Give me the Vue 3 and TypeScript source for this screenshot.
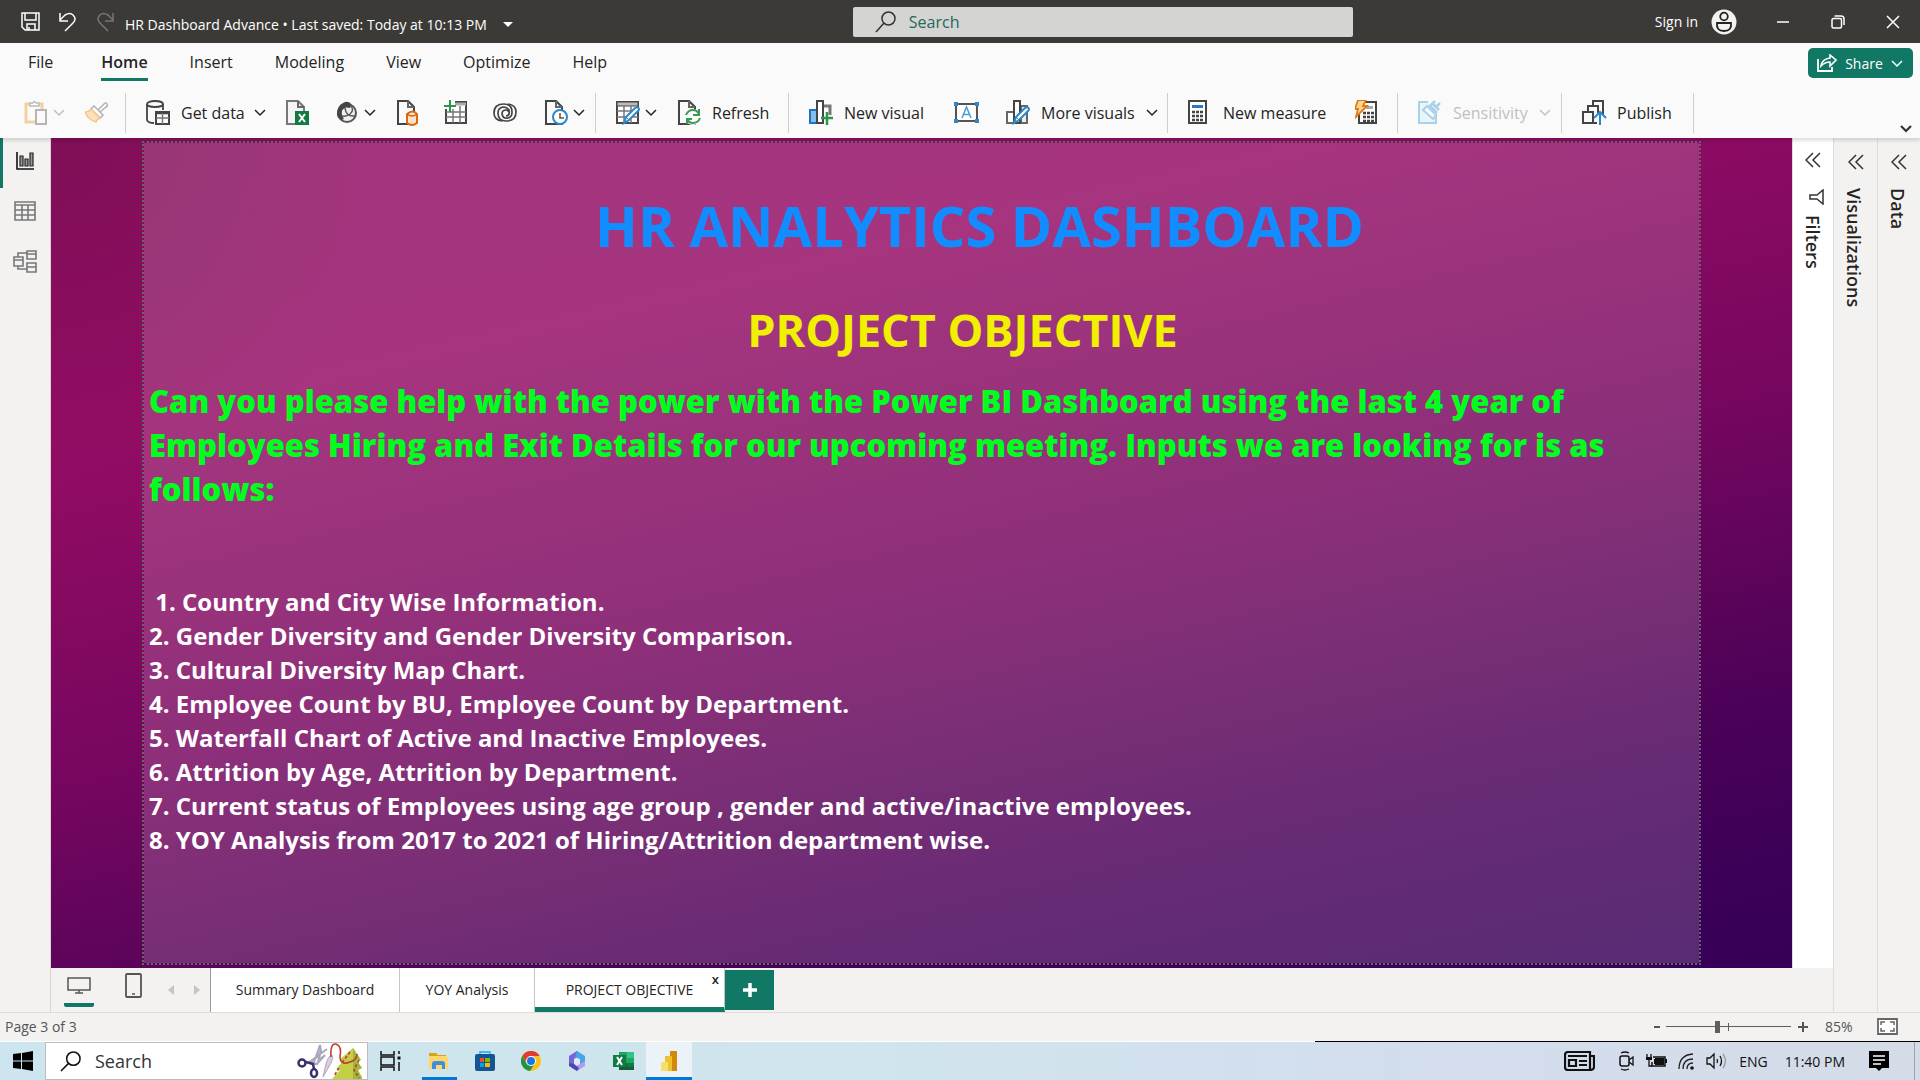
<script setup lang="ts">
import { ref } from 'vue'

interface RibbonItem {
  icon: string
  title: string
  width: number
  label?: string
  chevron?: boolean
  disabled?: boolean
}
interface RibbonGroup {
  width: number
  items: RibbonItem[]
}

const page = '<path d="M2 1h10l6 6v17H2z" fill="#fafafa" stroke="#444" stroke-width="2"/><path d="M12 1v6h6" fill="none" stroke="#666" stroke-width="2"/>'
const grid = '<path d="M1 2h21v21H1z" fill="#fff" stroke="#484644" stroke-width="2"/><path d="M1 2h21v4H1z" fill="#bbb" stroke="#484644" stroke-width="1"/><path d="M1 11h21M1 17h21M8 6v17M15 6v17" stroke="#777" stroke-width="1.5"/>'
const pencil = '<path d="M8 23l2-6 9-9q3-2 4 1 0 1-1 2l-9 9z" fill="#fff" stroke="#2b88c8" stroke-width="2"/><path d="M10 17l3 3" stroke="#2b88c8"/>'

const icons: Record<string, string> = {
  paste: '<path d="M7 4H2v18h9" fill="none" stroke="#f5cf9f" stroke-width="3"/><path d="M14 4h4v5" fill="none" stroke="#f5cf9f" stroke-width="3"/><path d="M6 6V3h3q1-3 3 0h3v3z" fill="#fff" stroke="#bbb" stroke-width="1.5"/><path d="M12 10h10v14H12z" fill="#fafafa" stroke="#b5b5b5" stroke-width="2"/>',
  brush: '<path d="M13 10l6-6q2-2 3 0t-1 3l-6 5" fill="#fff" stroke="#b5b5b5" stroke-width="1.600"/><path d="M9 6l9 9-3 3L6 9z" fill="#fff" stroke="#b5b5b5" stroke-width="1.600"/><path d="M6 9Q4 12 0 12q3 8 11 10 0-2 4-4z" fill="#fce0ba" stroke="#f5c48a" stroke-width="1.400"/>',
  database: '<ellipse cx="9" cy="4" rx="8" ry="3" fill="none" stroke="#444" stroke-width="1.8"/><path d="M1 4v16q1 3 7 3M17 4v6" fill="none" stroke="#444" stroke-width="1.8"/><path d="M10 12h13v12H10z" fill="#fff" stroke="#444" stroke-width="2"/><path d="M10 13h13" stroke="#444" stroke-width="2.5"/><path d="M10 18h13M16.500 13v11" stroke="#777" stroke-width="1.5"/>',
  excelFile: '<path d="M9 24H1V1h11l6 6v4" fill="#f4f4f4" stroke="#777" stroke-width="2"/><path d="M12 1v6h6" fill="none" stroke="#666" stroke-width="2"/><path d="M9 11h14v14H9z" fill="#107c41"/><path d="M13 14l6 8M19 14l-6 8" stroke="#fff" stroke-width="2"/>',
  hub: '<circle cx="11" cy="13" r="9" fill="#eee" stroke="#555" stroke-width="2"/><path d="M1 14Q1 6 7 3q5-3 8 1l-1 4Q8 6 6 11q-1 4 2 8l-3 1q-4-3-4-6z" fill="#444"/><path d="M9 8q1 9 10 8M14 5q5 5 0 9-4 3-8 2" fill="none" stroke="#555" stroke-width="1.500"/>',
  sqlFile: page + '<path d="M11 14q6-5 10 0v9q-5 4-10 0z" fill="#fce4cc" stroke="#d8690f" stroke-width="2"/><path d="M11 14q5 4 10 0" fill="none" stroke="#d8690f" stroke-width="1.5"/>',
  enterData: '<path d="M2 9v14h20V2H11" fill="#fff" stroke="#484644" stroke-width="2"/><path d="M11 4h11" stroke="#aaa" stroke-width="3"/><path d="M2 12h20M2 17h20M9 9v14M16 6v17" stroke="#777" stroke-width="1.500"/><path d="M6 0v12M0 6h12" stroke="#2f9648" stroke-width="2"/>',
  dataverse: '<g fill="none" stroke="#444" stroke-width="1.700"><path d="M9 21Q1 20 1 13 1 4 11 4q8 0 8 8 0 5-4 6-5 1-6-4 0-4 4-4 2 0 3 2"/><path d="M15 4q8 1 8 8 0 9-10 9-8 0-8-8 0-5 5-6 4 0 6 3 1 6-3 6"/></g>',
  recent: page + '<circle cx="16" cy="17" r="7" fill="#fff" stroke="#2b88c8" stroke-width="2"/><path d="M16 13v5h4" fill="none" stroke="#555" stroke-width="1.500"/>',
  transform: grid + pencil,
  refresh: page + '<circle cx="16" cy="17" r="8" fill="#fafafa"/><path d="M9 15q2-5 7-5 4 0 6 4M22 9v6h-6M23 18q-2 5-7 5-4 0-6-4M10 24v-5h5" fill="none" stroke="#3a9a52" stroke-width="2"/>',
  newVisual: '<path d="M1 10h7v13H1z" fill="#83beec" stroke="#1f74bd" stroke-width="2"/><path d="M14 6h7v9" fill="none" stroke="#777" stroke-width="3"/><path d="M8 1h6v22H8z" fill="#fff" stroke="#444" stroke-width="2"/><path d="M18 12v13M12 18h12" stroke="#2f9648" stroke-width="2.500"/>',
  textBox: '<path d="M2 4h21v17H2z" fill="#fff" stroke="#555" stroke-width="2"/><path d="M0 2h4v4H0zM21 2h4v4h-4zM0 19h4v4H0zM21 19h4v4h-4z" fill="#2b88c8"/><path d="M8 18l4.500-11L17 18M9.500 14.500h6" fill="none" stroke="#4a9bd4" stroke-width="1.500"/>',
  moreVisuals: '<path d="M1 12h7v11H1z" fill="#fff" stroke="#666" stroke-width="2"/><path d="M15 6h6v17h-6z" fill="#eee" stroke="#666" stroke-width="2"/><path d="M8 1h6v22H8z" fill="#fff" stroke="#444" stroke-width="2"/>' + pencil,
  calculator: '<path d="M1 1h17v22H1z" fill="#fff" stroke="#444" stroke-width="2"/><path d="M4 5h11v3H4z" fill="#2b78c4"/><path d="M4 12h11M4 16h11M4 20h11" stroke="#444" stroke-width="2.500" stroke-dasharray="3 1"/>',
  quick: '<path d="M4 2h17v21H4z" fill="#fff" stroke="#444" stroke-width="2"/><path d="M11 6h7v3h-7z" fill="#aaa"/><path d="M8 13h11M8 17h11M8 21h11" stroke="#444" stroke-width="2.500" stroke-dasharray="3 1"/><path d="M3 0h8L8 6h4L1 17l2-8H0z" fill="#fcd29b" stroke="#e07b12" stroke-width="1.800"/>',
  sensitivity: '<path d="M10 2H1v21h17v-9" fill="#e9f4fb" stroke="#a9d1ea" stroke-width="2"/><path d="M5 10l4-4 9 9-3 4z" fill="#fafafa" stroke="#a9d1ea" stroke-width="2"/><path d="M11 5l8 8M14 3l7 7M17 8l5-5M13 5l4-4" stroke="#a9d1ea" stroke-width="2.500"/>',
  publish: '<path d="M11 6V1h10v14M6 12V6h10v7M1 12h10v11H1zM11 23h4" fill="none" stroke="#444" stroke-width="2"/><path d="M18 25V13M12 18l6-6 6 6" fill="none" stroke="#2b88c8" stroke-width="2"/>'
}

const menu = ['File', 'Home', 'Insert', 'Modeling', 'View', 'Optimize', 'Help']
const activeMenu = ref('Home')

const ribbon: RibbonGroup[] = [
  { width: 122, items: [
    { icon: 'paste', title: 'Paste', width: 41, chevron: true, disabled: true },
    { icon: 'brush', title: 'Format painter', width: 24, disabled: true }
  ] },
  { width: 470, items: [
    { icon: 'database', title: 'Get data', label: 'Get data', width: 120, chevron: true },
    { icon: 'excelFile', title: 'Excel workbook', width: 30 },
    { icon: 'hub', title: 'Data hub', width: 40, chevron: true },
    { icon: 'sqlFile', title: 'SQL Server', width: 28 },
    { icon: 'enterData', title: 'Enter data', width: 29 },
    { icon: 'dataverse', title: 'Dataverse', width: 31 },
    { icon: 'recent', title: 'Recent sources', width: 41, chevron: true }
  ] },
  { width: 193, items: [
    { icon: 'transform', title: 'Transform data', width: 41, chevron: true },
    { icon: 'refresh', title: 'Refresh', label: 'Refresh', width: 94 }
  ] },
  { width: 379, items: [
    { icon: 'newVisual', title: 'New visual', label: 'New visual', width: 125 },
    { icon: 'textBox', title: 'Text box', width: 32 },
    { icon: 'moreVisuals', title: 'More visuals', label: 'More visuals', width: 152, chevron: true }
  ] },
  { width: 230, items: [
    { icon: 'calculator', title: 'New measure', label: 'New measure', width: 147 },
    { icon: 'quick', title: 'Quick measure', width: 24 }
  ] },
  { width: 164, items: [
    { icon: 'sensitivity', title: 'Sensitivity', label: 'Sensitivity', width: 133, chevron: true, disabled: true }
  ] },
  { width: 132, items: [
    { icon: 'publish', title: 'Publish', label: 'Publish', width: 94 }
  ] }
]

const objectives = [
  '\u00a01. Country and City Wise Information.',
  '2. Gender Diversity and Gender Diversity Comparison.',
  '3. Cultural Diversity Map Chart.',
  '4. Employee Count by BU, Employee Count by Department.',
  '5. Waterfall Chart of Active and Inactive Employees.',
  '6. Attrition by Age, Attrition by Department.',
  '7. Current status of Employees using age group , gender and active/inactive employees.',
  '8. YOY Analysis from 2017 to 2021 of Hiring/Attrition department wise.'
]

const zoomLevel = ref(41)
</script>

<template>
  <div class="app">
    <header class="titlebar">
      <div class="quick-access">
        <button aria-label="Save"><svg width="20" height="20" viewBox="0 0 20 20"><path d="M1 1h17v17H4l-3-3zM4 1v7h11V1M6 18v-6h8v6M8 18v-3" fill="none" stroke="#fff" stroke-width="1.5" /></svg></button>
        <button aria-label="Undo"><svg width="20" height="20" viewBox="0 0 20 20"><path d="M2 1v8h8M2 8l5-5q5-3 8 0 4 4 0 8l-8 8" fill="none" stroke="#fff" stroke-width="1.5" /></svg></button>
        <button aria-label="Redo" disabled><svg width="20" height="20" viewBox="0 0 20 20"><path d="M18 1v8h-8M18 8l-5-5q-5-3-8 0-4 4 0 8l8 8" fill="none" stroke="#777" stroke-width="1.5" /></svg></button>
      </div>
      <button class="doc-title">HR Dashboard Advance • Last saved: Today at 10:13 PM
        <svg width="10" height="5" viewBox="0 0 10 5"><path d="M0 0h10L5 5z" fill="#fff" /></svg>
      </button>
      <label class="search">
        <svg width="22" height="22" viewBox="0 0 22 22"><circle cx="13.500" cy="7.500" r="6.500" fill="none" stroke="#333" stroke-width="1.500" /><path d="M9 12l-8 9" stroke="#333" stroke-width="1.500" /></svg>
        <input type="search" placeholder="Search" aria-label="Search commands" />
      </label>
      <div class="account">
        <button class="signin">Sign in
          <svg width="26" height="26" viewBox="0 0 26 26"><circle cx="13" cy="13" r="12.500" fill="#f3f2f1" /><circle cx="13" cy="7.500" r="3.800" fill="none" stroke="#222" stroke-width="1.800" /><path d="M6 14h14q1 8-7 8t-7-8z" fill="none" stroke="#222" stroke-width="1.800" /></svg>
        </button>
        <button class="win" aria-label="Minimize"><svg width="14" height="14" viewBox="0 0 14 14"><path d="M1 7h12" stroke="#fff" stroke-width="1.500" /></svg></button>
        <button class="win" aria-label="Restore"><svg width="14" height="14" viewBox="0 0 14 14"><rect x="1" y="3.500" width="9.500" height="9.500" rx="1.500" fill="none" stroke="#fff" stroke-width="1.500" /><path d="M3.500 1h6.500q3 0 3 3v6" fill="none" stroke="#fff" stroke-width="1.500" /></svg></button>
        <button class="win" aria-label="Close"><svg width="14" height="14" viewBox="0 0 14 14"><path d="M1 1l12 12M13 1L1 13" stroke="#fff" stroke-width="1.500" /></svg></button>
      </div>
    </header>

    <nav class="menubar">
      <button v-for="m in menu" :key="m" class="menu-item" :class="{ active: m === activeMenu, first: m === 'File' }" @click="activeMenu = m">{{ m }}</button>
      <button class="share">
        <svg width="20" height="18" viewBox="0 0 20 18"><path d="M1 5v12h14v-4" fill="none" stroke="#fff" stroke-width="1.800" /><path d="M4 12q1-7 9-8V1l6 5-6 6V8q-5 0-9 4z" fill="none" stroke="#fff" stroke-width="1.600" /></svg>
        <span>Share</span>
        <svg width="12" height="7" viewBox="0 0 12 7"><path d="M1 1l5 5 5-5" fill="none" stroke="#fff" stroke-width="1.500" /></svg>
      </button>
    </nav>

    <div class="ribbon">
      <div v-for="(g, gi) in ribbon" :key="gi" class="group" :style="{ width: g.width + 'px' }">
        <button v-for="it in g.items" :key="it.icon" class="tool" :aria-label="it.title" :disabled="it.disabled" :style="{ width: it.width + 'px' }">
          <svg class="tool-icon" width="25" height="26" viewBox="0 0 25 26" v-html="icons[it.icon]"></svg>
          <span v-if="it.label" class="tool-label">{{ it.label }}</span>
          <svg v-if="it.chevron" class="chev" width="12" height="8" viewBox="0 0 12 8"><path d="M1 1l5 5 5-5" fill="none" stroke="currentColor" stroke-width="1.500" /></svg>
        </button>
      </div>
      <button class="collapse" aria-label="Collapse ribbon"><svg width="12" height="8" viewBox="0 0 12 8"><path d="M1 1l5 5 5-5" fill="none" stroke="#333" stroke-width="2.200" /></svg></button>
    </div>

    <main class="workspace">
      <nav class="rail">
        <button class="active" aria-label="Report view"><svg width="20" height="20" viewBox="0 0 20 20"><path d="M2 1v17h17" fill="none" stroke="#111" stroke-width="1.600" /><path d="M5 5h3v10H5zM10 8h3v7h-3zM15 2h3v13h-3z" fill="#999" stroke="#222" stroke-width="1.200" /></svg></button>
        <button aria-label="Table view"><svg width="22" height="20" viewBox="0 0 22 20"><path d="M1 1h20v18H1zM1 4h20M1 9h20M1 14h20M8 4v15M14 4v15" fill="none" stroke="#777" stroke-width="1.600" /></svg></button>
        <button aria-label="Model view"><svg width="24" height="24" viewBox="0 0 24 24"><path d="M1 8h9v9H1zM1 11h9M14 2h9v8h-9zM14 5h9M14 14h9v9h-9zM14 18h9M5 8V4h9M5 17v3h9" fill="none" stroke="#777" stroke-width="1.600" /></svg></button>
      </nav>

      <div class="center">
        <div class="stage">
          <section class="canvas">
            <article class="page">
              <h1>HR ANALYTICS DASHBOARD</h1>
              <h2>PROJECT OBJECTIVE</h2>
              <p>Can you please help with the power with the Power BI Dashboard using the last 4 year of<br />Employees Hiring and Exit Details for our upcoming meeting. Inputs we are looking for is as<br />follows:</p>
              <ul>
                <li v-for="o in objectives" :key="o">{{ o }}</li>
              </ul>
            </article>
          </section>
          <aside class="pane filters">
            <button aria-label="Expand filters"><svg width="16" height="16" viewBox="0 0 16 16"><path d="M8 1L1 8l7 7M15 1L8 8l7 7" fill="none" stroke="#333" stroke-width="1.500" /></svg></button>
            <svg class="funnel" width="16" height="16" viewBox="0 0 16 16"><path d="M14 1v14L8 10H1V6h7z" fill="none" stroke="#333" stroke-width="1.500" /></svg>
            <span>Filters</span>
          </aside>
        </div>
        <div class="tabs">
          <button class="device on" aria-label="Desktop layout"><svg width="24" height="17" viewBox="0 0 24 17"><path d="M1 1h22v12H1zM12 13v3M8 16h8" fill="none" stroke="#555" stroke-width="1.500" /></svg></button>
          <button class="device" aria-label="Mobile layout"><svg width="17" height="25" viewBox="0 0 17 25"><rect x="1" y="1" width="15" height="23" rx="1" fill="none" stroke="#555" stroke-width="1.800" /><path d="M7 21h3" stroke="#555" stroke-width="1.500" /></svg></button>
          <button class="arrow" aria-label="Previous page"><svg width="6" height="10" viewBox="0 0 6 10"><path d="M6 0v10L0 5z" fill="#c4c4c4" /></svg></button>
          <button class="arrow" aria-label="Next page"><svg width="6" height="10" viewBox="0 0 6 10"><path d="M0 0v10l6-5z" fill="#c4c4c4" /></svg></button>
          <button class="tab wide first">Summary Dashboard</button>
          <button class="tab">YOY Analysis</button>
          <div class="tab wide current">
            <button class="tab-name">PROJECT OBJECTIVE</button>
            <button class="close" aria-label="Delete page">x</button>
          </div>
          <button class="add" aria-label="New page"><svg width="14" height="14" viewBox="0 0 14 14"><path d="M7 0v14M0 7h14" stroke="#fff" stroke-width="3.500" /></svg></button>
        </div>
      </div>

      <aside class="pane visuals">
        <button aria-label="Expand visualizations"><svg width="16" height="16" viewBox="0 0 16 16"><path d="M8 1L1 8l7 7M15 1L8 8l7 7" fill="none" stroke="#333" stroke-width="1.500" /></svg></button>
        <span>Visualizations</span>
      </aside>
      <aside class="pane data">
        <button aria-label="Expand data"><svg width="16" height="16" viewBox="0 0 16 16"><path d="M8 1L1 8l7 7M15 1L8 8l7 7" fill="none" stroke="#333" stroke-width="1.500" /></svg></button>
        <span>Data</span>
      </aside>
    </main>

    <footer class="status">
      <span>Page 3 of 3</span>
      <div class="zoom">
        <button aria-label="Zoom out"><svg width="6" height="10" viewBox="0 0 6 10"><path d="M0 5h6" stroke="#555" stroke-width="2" /></svg></button>
        <input v-model="zoomLevel" type="range" min="0" max="100" aria-label="Zoom" />
        <button aria-label="Zoom in"><svg width="10" height="10" viewBox="0 0 10 10"><path d="M0 5h10M5 0v10" stroke="#555" stroke-width="2" /></svg></button>
        <output>85%</output>
        <button aria-label="Fit to page"><svg width="21" height="17" viewBox="0 0 21 17"><path d="M1 1h19v15H1z" fill="#fff" stroke="#666" stroke-width="1.800" /><path d="M4 7V4h4M13 4h4v3M17 10v3h-4M8 13H4v-3" fill="none" stroke="#666" stroke-width="1.500" /></svg></button>
      </div>
    </footer>

    <div class="taskbar">
      <button class="start" aria-label="Start"><svg width="20" height="20" viewBox="0 0 20 20"><path d="M0 3l8-1v7.500H0zM9 2l11-2v9.500H9zM0 10.500h8V18l-8-1zM9 10.500h11V20L9 18z" fill="#000" /></svg></button>
      <label class="task-search">
        <svg width="21" height="21" viewBox="0 0 22 22"><circle cx="14" cy="8" r="7" fill="none" stroke="#111" stroke-width="1.600" /><path d="M9 13l-8 8" stroke="#111" stroke-width="1.600" /></svg>
        <input type="search" placeholder="Search" aria-label="Search Windows" />
        <svg width="66" height="36" viewBox="0 0 66 36"><path d="M11 20L30 6M16 22l7-20 1 6-4 14M12 19l8 2 8-9" fill="#b9b8cc" stroke="#a9a8bd" stroke-width="2" /><circle cx="5" cy="20" r="3.500" fill="none" stroke="#39306b" stroke-width="2.500" /><ellipse cx="17" cy="30" rx="3" ry="4" fill="none" stroke="#39306b" stroke-width="2.500" /><path d="M9 19l7 2 1 5" fill="none" stroke="#39306b" stroke-width="2.500" /><path d="M35 12q2 3-1 8l-8 14 3-13q2-8 6-9z" fill="#d8cfe0" stroke="#b4a6c4" /><path d="M56 5l8 12-4 1 5 7-4 2 4 7v2H35l8-9-4-1 7-8-4-1z" fill="#c3cf45" /><path d="M56 5l8 12-4 1 5 7-4 2 4 9h-9z" fill="#9fb73a" /><path d="M34 14Q33 0 39 1q6 2 4 12 0 10 10 6 7-2 7-8" fill="none" stroke="#c23b34" stroke-width="1.600" /><path d="M53 9l-9 12M62 17l-5 10 5 8M42 25l-5 8" fill="none" stroke="#c23b34" stroke-width="1.600" stroke-dasharray="3 2" /></svg>
      </label>
      <button class="app-btn" aria-label="Task view"><svg width="22" height="20" viewBox="0 0 22 20"><path d="M1 0v4h13V0M1 6h13v8H1zM1 20v-4h13v4M19 0v3M19 11v9" fill="none" stroke="#111" stroke-width="1.500" /><path d="M17.500 5.500h3v3h-3z" fill="#111" /></svg></button>
      <button class="app-btn running" aria-label="File Explorer"><svg width="20" height="18" viewBox="0 0 20 18"><path d="M0 1h7l2 2h8v5H0z" fill="#dfa019" /><path d="M0 4h17l2 2v11H0z" fill="#ffd767" /><path d="M3 17v-5q0-3 3-3h7q3 0 3 3v5h-3v-4H7v4z" fill="#3d8ee0" /></svg></button>
      <button class="app-btn" aria-label="Store"><svg width="20" height="20" viewBox="0 0 20 20"><path d="M5 4V1h10v3" fill="none" stroke="#38bdf0" stroke-width="1.800" /><rect y="3" width="20" height="17" rx="2" fill="#155395" /><path d="M5 7h4v4H5z" fill="#f25022" /><path d="M10 7h5v4h-5z" fill="#7fba00" /><path d="M5 12h4v4H5z" fill="#00a4ef" /><path d="M10 12h5v4h-5z" fill="#ffb900" /></svg></button>
      <button class="app-btn" aria-label="Chrome"><svg width="20" height="20" viewBox="0 0 20 20"><circle cx="10" cy="10" r="10" fill="#fbc116" /><path d="M1.300 5A10 10 0 0 1 18.700 5H10L6 12z" fill="#e33b2e" /><path d="M1.300 5A10 10 0 0 0 9 20l5-8-8 1z" fill="#229342" /><circle cx="10" cy="10" r="5" fill="#fff" /><circle cx="10" cy="10" r="4" fill="#1a73e8" /></svg></button>
      <button class="app-btn" aria-label="Microsoft 365"><svg width="18" height="20" viewBox="0 0 18 20"><path d="M9 0L1 5v9l5 3V8l6-4z" fill="#7764d8" /><path d="M9 0l8 5v7l-5 1V8L7 6z" fill="#4aa2e8" /><path d="M17 10v5l-8 5-5-3 8-4z" fill="#b49af2" /><path d="M1 12l5 1 5 4-2 3-8-5z" fill="#4e46a8" /><path d="M9 7l3 2v3l-3 2-3-2V9z" fill="#dcebf3" /></svg></button>
      <button class="app-btn" aria-label="Excel"><svg width="21" height="20" viewBox="0 0 21 20"><path d="M6 1h15v18H6z" fill="#21a366" /><path d="M14 1h7v6h-7z" fill="#33c481" /><path d="M6 12h15v7H6z" fill="#185c37" /><path d="M14 12h7v4h-7z" fill="#107c41" /><path d="M0 4h13v12H0z" fill="#107c41" /><path d="M4 6l5 8M9 6l-5 8" stroke="#fff" stroke-width="2" /></svg></button>
      <button class="app-btn focused" aria-label="Power BI"><svg width="16" height="20" viewBox="0 0 16 20"><path d="M9 0h7v20H9z" fill="#d18a0e" /><path d="M4 5h7v15H4z" fill="#eec12f" /><path d="M0 11h7v9H0z" fill="#f7df6b" /></svg></button>
      <div class="tray">
        <svg class="news" width="31" height="20" viewBox="0 0 31 20"><path d="M4 1h22v18H4q-3 0-3-3V4q0-3 3-3zM26 5h4v11q0 3-4 3" fill="none" stroke="#111" stroke-width="2.200" /><path d="M4 5h19M15 10h8M15 14h8M5 9h7v6H5z" fill="none" stroke="#111" stroke-width="2.200" /></svg>
        <svg width="16" height="20" viewBox="0 0 16 20"><rect x="1" y="5" width="9" height="10" rx="2" fill="none" stroke="#111" stroke-width="1.500" /><path d="M10 9l4-3v8l-4-3M2 2q4-2 8 0M2 18q4 2 8 0" fill="none" stroke="#111" stroke-width="1.300" /></svg>
        <svg width="21" height="14" viewBox="0 0 21 14"><path d="M7 3h12v9H6V8" fill="none" stroke="#111" stroke-width="1.500" /><path d="M8 5h9v5H8zM19 5h2v4h-2z" fill="#111" /><path d="M9 4h9v7H9z" fill="#111" /><path d="M1 0v3M5 0v3M3 6v6h3" fill="none" stroke="#111" stroke-width="1.300" /><path d="M0 3h6v3H0z" fill="#111" /></svg>
        <svg width="17" height="17" viewBox="0 0 17 17"><path d="M1 16Q1 2 15 1M5 16q0-10 10-10M9 16q0-6 6-6" fill="none" stroke="#222" stroke-width="1.300" /><circle cx="14" cy="15" r="1.800" fill="#111" /></svg>
        <svg width="21" height="18" viewBox="0 0 21 18"><path d="M1 6h3l4-4v14l-4-4H1zM11 7q1 2 0 4M14 4q3 5 0 10" fill="none" stroke="#111" stroke-width="1.300" /><path d="M17 2q5 7 0 14" fill="none" stroke="#999" stroke-width="1.300" /></svg>
        <span class="lang">ENG</span>
        <time>11:40 PM</time>
        <svg class="notice" width="20" height="20" viewBox="0 0 20 20"><path d="M0 0h20v17h-7l-3 3-3-3H0z" fill="#000" /><path d="M4 5h12M4 9h12M4 13h8" stroke="#fff" stroke-width="1.300" /></svg>
      </div>
      <button class="show-desktop" aria-label="Show desktop"></button>
    </div>
  </div>
</template>

<style>
body {
  margin: 0;
}
</style>

<style scoped>
* {
  box-sizing: border-box;
}
.app {
  min-height: 100vh;
  display: flex;
  flex-direction: column;
  background: #f3f2f1;
  font-family: "Open Sans", "Noto Sans", sans-serif;
  font-size: 14px;
  color: #252423;
}
button {
  border: 0;
  padding: 0;
  background: none;
  font: inherit;
  color: inherit;
  white-space: nowrap;
}
input {
  border: 0;
  padding: 0;
  background: none;
  font: inherit;
  outline: 0;
}
svg {
  display: block;
  flex: none;
}

.titlebar {
  height: 43px;
  display: flex;
  align-items: center;
  background: #3b3a37;
  color: #fff;
}
.quick-access {
  display: flex;
  gap: 17px;
  padding-left: 21px;
}
.doc-title {
  display: flex;
  align-items: center;
  gap: 16px;
  margin-left: 10px;
  padding-top: 5px;
}
.search {
  flex: 0 1 500px;
  height: 30px;
  margin: 0 auto 0 340px;
  padding-left: 22px;
  display: flex;
  align-items: center;
  gap: 12px;
  border-radius: 2px;
  background: #d4d4d2;
  font-size: 16px;
}
.search input {
  width: 100%;
}
.search input::placeholder {
  color: #23695a;
  opacity: 1;
}
.account {
  display: flex;
  align-items: center;
}
.signin {
  display: flex;
  align-items: center;
  gap: 13px;
  margin-right: 18px;
}
.win {
  width: 55px;
  height: 43px;
  display: grid;
  place-items: center;
}

.menubar {
  height: 40px;
  display: flex;
  align-items: center;
  gap: 42px;
  padding: 0 7px 0 28px;
  background: #fafafa;
  font-size: 16px;
}
.menu-item {
  height: 36px;
  border-bottom: 3px solid transparent;
}
.menu-item.first {
  margin-right: 6px;
}
.menu-item.active {
  border-bottom-color: #117865;
  font-weight: 600;
}
.share {
  width: 105px;
  height: 30px;
  margin-left: auto;
  padding: 0 10px 0 9px;
  display: flex;
  align-items: center;
  justify-content: space-between;
  border-radius: 5px;
  background: #117865;
  color: #fff;
  font-size: 14px;
}

.ribbon {
  height: 55px;
  display: flex;
  align-items: center;
  padding: 5px 8px 0 4px;
  background: #fafafa;
  box-shadow: 0 3px 3px rgba(0, 0, 0, 0.12);
  position: relative;
}
.group {
  height: 40px;
  display: flex;
  align-items: center;
  gap: 20px;
  padding-left: 20px;
  border-right: 1px solid #d0cfce;
}
.tool {
  display: flex;
  align-items: center;
  flex: none;
}
.tool-label {
  margin-left: 10px;
  font-size: 16px;
}
.tool:disabled {
  color: #c2c0be;
}
.chev {
  margin-left: auto;
}
.collapse {
  margin: 32px 0 0 auto;
}

.workspace {
  flex: 1;
  display: flex;
}
.rail {
  width: 51px;
  display: flex;
  flex-direction: column;
  border-right: 1px solid #d8d6d4;
}
.rail button {
  height: 50px;
  display: grid;
  place-items: center;
  border-left: 3px solid transparent;
  padding: 0 3px 4px 0;
}
.rail .active {
  border-left-color: #117865;
}
.center {
  flex: 1;
  min-width: 0;
  display: flex;
  flex-direction: column;
}
.stage {
  flex: 1;
  display: flex;
}
.canvas {
  flex: 1;
  min-width: 0;
  display: flex;
  padding: 3px 91px;
  background:
    radial-gradient(circle at 0 0, rgba(90, 18, 60, 0.35), transparent 350px),
    linear-gradient(167deg, #920d64 0%, #940c65 25%, #880a62 36%, #76065f 53%, #5c045a 68%, #4a0158 79%, #3a0058 94%, #360058 100%);
}
.page {
  flex: 1;
  min-width: 0;
  padding: 44px 5px 0;
  border: 2px dotted #666;
  background: rgba(255, 255, 255, 0.17);
  background-clip: padding-box;
}
h1,
h2,
p,
ul {
  margin: 0;
  padding: 0;
  white-space: nowrap;
}
h1 {
  padding-left: 116px;
  text-align: center;
  font-size: 56px;
  line-height: 76px;
  color: #118dff;
}
h2 {
  margin-top: 37px;
  padding-left: 82px;
  text-align: center;
  font-size: 45px;
  line-height: 60px;
  color: #f0f000;
}
p {
  margin-top: 19px;
  font-size: 31px;
  line-height: 44px;
  font-weight: 800;
  color: #00ff1e;
}
ul {
  margin-top: 74px;
  list-style: none;
  font-size: 24px;
  line-height: 34px;
  font-weight: 700;
  color: #fff;
}

.pane {
  display: flex;
  flex-direction: column;
  align-items: center;
  padding-top: 16px;
  border-left: 1px solid #dedcda;
}
.pane span {
  writing-mode: vertical-rl;
  font-size: 18px;
  font-weight: 600;
  line-height: 24px;
  white-space: nowrap;
}
.filters {
  width: 41px;
  padding-top: 14px;
  background: #fff;
}
.filters .funnel {
  margin: 21px 0 10px 8px;
}
.visuals {
  width: 44px;
}
.visuals span,
.data span {
  margin: 18px 3px 0 0;
}
.data {
  width: 43px;
}

.tabs {
  height: 44px;
  display: flex;
}
.device {
  width: 30px;
  height: 39px;
  margin-left: 13px;
  display: grid;
  place-items: center;
  border-bottom: 4px solid transparent;
  border-radius: 2px;
}
.device + .device {
  margin: 0 10px 0 24px;
}
.device.on {
  border-bottom-color: #117865;
}
.arrow {
  width: 26px;
  display: grid;
  place-items: center;
}
.tab {
  width: 135px;
  background: #fff;
  border-right: 1px solid #c8c6c4;
  padding-bottom: 2px;
}
.tab.wide {
  width: 190px;
}
.tab.first {
  border-left: 1px solid #999;
}
.current {
  display: flex;
  align-items: center;
  justify-content: center;
  padding: 3px 0 0;
  border-bottom: 5px solid #117865;
  font-weight: 500;
  position: relative;
}
.close {
  position: absolute;
  top: 2px;
  right: 5px;
  font-size: 13px;
  font-weight: 600;
}
.add {
  width: 49px;
  height: 40px;
  margin-top: 2px;
  display: grid;
  place-items: center;
  background: #117865;
}

.status {
  height: 30px;
  display: flex;
  align-items: center;
  justify-content: space-between;
  padding: 0 22px 0 5px;
  background: linear-gradient(#dedcda, #dedcda) 0 0 / 100% 1px no-repeat;
  border-bottom: 1px solid #fff;
  border-image: linear-gradient(90deg, #fff 68.5%, #000 68.5%) 0 0 1 0;
  color: #555;
}
.zoom {
  display: flex;
  align-items: center;
}
.zoom input {
  width: 125px;
  height: 12px;
  margin: 0 7px 0 6px;
  appearance: none;
  background:
    linear-gradient(#605e5c, #605e5c) 62px 50% / 1px 8px no-repeat,
    linear-gradient(#605e5c, #605e5c) 0 50% / 100% 1px no-repeat;
}
.zoom input::-webkit-slider-thumb {
  appearance: none;
  width: 5px;
  height: 12px;
  background: #605e5c;
}
.zoom output {
  width: 52px;
  margin-left: 17px;
}

.taskbar {
  height: 38px;
  display: flex;
  background: linear-gradient(90deg, #cde5ee, #d0e5ee 45%, #d3ddec 75%, #d5dce8);
}
.start {
  width: 45px;
  display: grid;
  place-items: center;
}
.task-search {
  width: 323px;
  display: flex;
  align-items: center;
  padding: 0 4px 0 14px;
  border: 1px solid #bbb;
  background: #fff;
  font-size: 18px;
}
.task-search input {
  flex: 1;
  min-width: 0;
  margin-left: 14px;
}
.task-search input::placeholder {
  color: #333;
  opacity: 1;
}
.app-btn {
  width: 46px;
  display: grid;
  place-items: center;
}
.app-btn.running {
  margin-left: 2px;
  background: linear-gradient(#0078d7, #0078d7) 50% 100% / 35px 3px no-repeat;
}
.app-btn.focused {
  background: #ebf3f9;
  border-bottom: 3px solid #0078d7;
  padding-top: 3px;
}
.tray {
  margin-left: auto;
  display: flex;
  align-items: center;
  gap: 11px;
  color: #111;
}
.news {
  margin-right: 13px;
}
.lang {
  margin: 0 6px 0 1px;
}
.notice {
  margin: 0 25px 0 13px;
}
.show-desktop {
  width: 6px;
  border-left: 1px solid #9aa5b2;
}
</style>
